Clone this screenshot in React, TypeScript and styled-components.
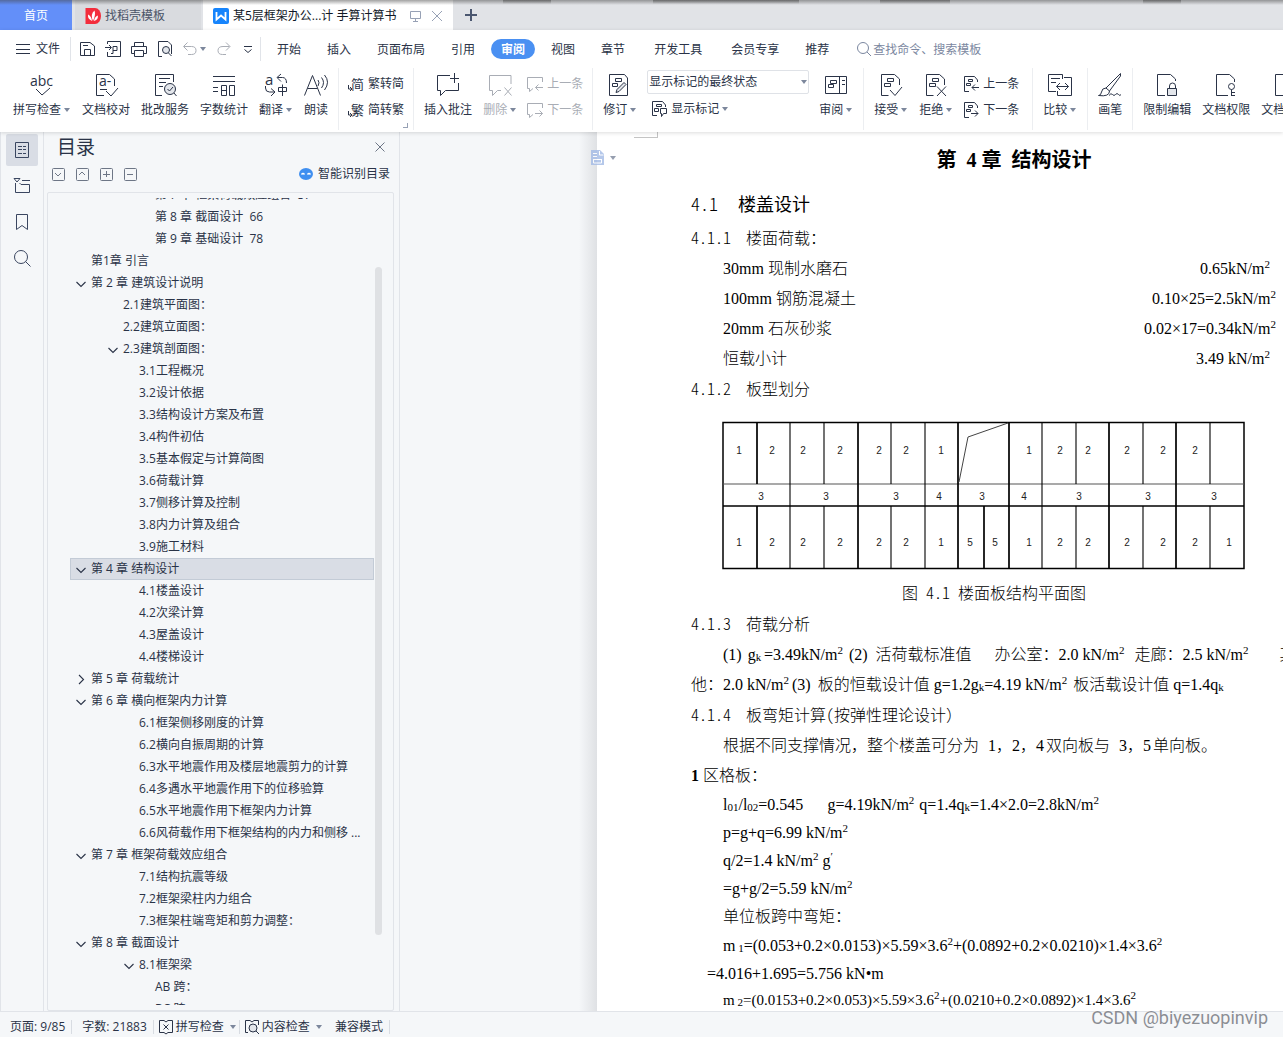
import React from "react";
import styled, { createGlobalStyle, css } from "styled-components";

const ink = "#2a3347";
const muted = "#a9adb5";
const line = "#e1e4e9";
const panel = "#f5f7f9";
const uiFont = `"Open Sans", "Noto Sans CJK SC", sans-serif`;
const docFont = `"Liberation Serif", "Noto Sans CJK SC", serif`;

const GlobalStyle = createGlobalStyle`
  * { box-sizing: border-box; }
  body { margin: 0; overflow: hidden; background: ${panel}; }
  button, input, select { font: inherit; color: inherit; }
  button { border: 0; background: none; padding: 0; white-space: nowrap; }
  ul, h1, h2, h3, p, figure { margin: 0; padding: 0; }
  svg { display: block; flex: none; overflow: visible; fill: none; stroke: currentColor; }
`;

const Shell = styled.div`
  position: relative;
  display: flex;
  flex-direction: column;
  height: 100vh;
  overflow: hidden;
  font: 12px/18px ${uiFont};
  color: ${ink};
`;

/* ---------- window tabs ---------- */

const TabStrip = styled.nav`
  display: flex;
  flex: none;
  height: 30px;
  background: #e1e3e7;
  position: relative;
  &::after {
    content: "";
    position: absolute;
    inset: 0 0 auto 0;
    height: 5px;
    background:
      linear-gradient(rgba(40, 40, 40, 0.4), transparent) 503px 0 / 48px 4px no-repeat,
      linear-gradient(rgba(40, 40, 40, 0.4), transparent) 653px 0 / 146px 4px no-repeat,
      linear-gradient(rgba(40, 40, 40, 0.4), transparent) 880px 0 / 70px 4px no-repeat,
      linear-gradient(rgba(40, 40, 40, 0.4), transparent) 1143px 0 / 38px 4px no-repeat,
      linear-gradient(rgba(70, 70, 70, 0.5), rgba(120, 120, 120, 0));
  }
`;

const tabColors = {
  home: css`width: 72px; justify-content: center; margin-right: 3px; color: #fff; background: #638ff9;`,
  idle: css`width: 126px; margin-right: 2px; padding-left: 10px; color: #4b5468; background: #d9dbdf;`,
  active: css`width: 250px; padding-left: 10px; color: #111827; background: #fff;`,
};

const WindowTab = styled.button<{ $kind: keyof typeof tabColors }>`
  display: flex;
  align-items: center;
  flex: none;
  gap: 4px;
  padding-top: 2px;
  ${(p) => tabColors[p.$kind]}
`;

const TabTools = styled.span`
  display: flex;
  align-items: center;
  gap: 9px;
  margin-left: 10px;
  color: #97a1b5;
`;

const NewTab = styled.button`
  width: 36px;
  display: flex;
  align-items: center;
  justify-content: center;
  color: #4b5770;
`;

/* ---------- menu bar ---------- */

const Header = styled.header`
  position: relative;
  z-index: 2;
  flex: none;
  background: #fff;
  box-shadow: 0 1px 4px rgba(0, 0, 0, 0.14);
`;

const MenuBar = styled.div`
  display: flex;
  align-items: center;
  height: 38px;
`;

const FileButton = styled.button`
  display: flex;
  align-items: center;
  gap: 6px;
  height: 24px;
  padding: 0 10px 0 16px;
  border-right: 1px solid ${line};
`;

const QuickBar = styled.div`
  display: flex;
  align-items: center;
  gap: 10px;
  height: 24px;
  padding: 0 5px 0 8px;
  border-right: 1px solid ${line};
`;

const QuickButton = styled.button<{ $off?: boolean }>`
  display: flex;
  align-items: center;
  color: ${(p) => (p.$off ? muted : ink)};
`;

const MenuTabs = styled.div`
  display: flex;
  gap: 6px;
  margin-left: 6px;
`;

const MenuTab = styled.button<{ $on?: boolean; $wide?: boolean }>`
  height: 20px;
  padding: 1px 10px 0 ${(p) => (p.$wide ? 13 : 10)}px;
  border-radius: 10px;
  ${(p) => p.$on && css`background: #4a90f2; color: #fff; font-weight: 700;`}
`;

const Search = styled.label`
  display: flex;
  align-items: center;
  gap: 1px;
  margin-left: 17px;
  color: #7b87a0;
`;

const SearchInput = styled.input`
  width: 140px;
  height: 20px;
  padding: 0;
  border: 0;
  outline: 0;
  background: none;
  &::placeholder { color: #7b87a0; opacity: 1; }
`;

/* ---------- ribbon ---------- */

const Ribbon = styled.div`
  display: flex;
  height: 64px;
  overflow: hidden;
`;

const Group = styled.div<{ $first?: boolean }>`
  position: relative;
  display: flex;
  flex: none;
  height: 62px;
  padding: 4px 5px 0 ${(p) => (p.$first ? 7 : 4)}px;
  border-right: 1px solid #eceef1;
`;

const BigButton = styled.button<{ $off?: boolean }>`
  display: flex;
  flex-direction: column;
  align-items: center;
  height: 52px;
  padding: 1px 5px 0 6px;
  color: ${(p) => (p.$off ? muted : ink)};
`;

const Caption = styled.span`
  display: flex;
  align-items: center;
  height: 26px;
`;

const Arrow = styled.i`
  width: 6px;
  margin: 0 1px 0 3px;
  border: solid transparent;
  border-width: 4px 3px 0;
  border-top-color: #7c879c;
`;

const Stack = styled.div<{ $wide?: boolean }>`
  display: flex;
  flex-direction: column;
  gap: 2px;
  padding: 0 ${(p) => (p.$wide ? 8 : 4)}px 0 5px;
`;

const SmallButton = styled.button<{ $off?: boolean }>`
  display: flex;
  align-items: center;
  gap: 4px;
  height: 24px;
  color: ${(p) => (p.$off ? muted : ink)};
`;

const Corner = styled.i`
  position: absolute;
  right: 5px;
  bottom: 2px;
  width: 5px;
  height: 5px;
  border: solid #97a1b5;
  border-width: 0 1px 1px 0;
`;

const MarkupStack = styled.div`
  display: flex;
  flex-direction: column;
  width: 162px;
  margin: 0 4px 0 5px;
`;

const SelectBox = styled.div`
  display: flex;
  align-items: center;
  margin-top: -2px;
  border: 1px solid #dfe2e7;
  border-radius: 2px;
`;

const Select = styled.select`
  flex: 1;
  height: 22px;
  padding: 0 1px;
  border: 0;
  background: none;
  appearance: none;
`;

const MarkupButton = styled(SmallButton)`
  margin-left: 5px;
  height: 30px;
`;

/* ---------- workspace ---------- */

const Workspace = styled.div`
  display: flex;
  flex: 1;
  min-height: 0;
`;

const Rail = styled.nav`
  display: flex;
  flex-direction: column;
  flex: none;
  gap: 4px;
  width: 44px;
  padding: 2px 0 0 5px;
  background: ${panel};
  border: solid ${line};
  border-width: 0 1px;
`;

const RailButton = styled.button<{ $on?: boolean }>`
  display: flex;
  align-items: center;
  justify-content: center;
  width: 32px;
  height: 32px;
  border-radius: 2px;
  color: #3a4660;
  background: ${(p) => (p.$on ? "#d9dde5" : "none")};
`;

const Outline = styled.aside`
  display: flex;
  flex-direction: column;
  flex: none;
  width: 356px;
  padding: 0 5px 0 3px;
  background: ${panel};
  border-right: 1px solid ${line};
`;

const OutlineHead = styled.div`
  display: flex;
  align-items: center;
  justify-content: space-between;
  height: 30px;
  padding: 0 8px 0 10px;
`;

const OutlineTitle = styled.h2`
  font-size: 19px;
  font-weight: 400;
`;

const OutlineTools = styled.div`
  display: flex;
  align-items: center;
  gap: 10px;
  height: 24px;
  margin-bottom: 6px;
  padding: 0 4px 0 4px;
`;

const ToolBox = styled.button`
  display: flex;
  color: #6d7686;
`;

const SmartButton = styled.button`
  display: flex;
  align-items: center;
  gap: 5px;
  margin-left: auto;
`;

const ListBox = styled.div`
  display: flex;
  flex: 1;
  min-height: 0;
  padding: 5px 11px 5px 22px;
  border: 1px solid ${line};
  border-radius: 2px;
`;

const Tree = styled.div`
  flex: 1;
  min-width: 0;
  overflow: hidden;
`;

const TreeList = styled.ul`
  margin-top: -14px;
  list-style: none;
`;

const TreeRow = styled.li<{ $indent: number; $on?: boolean }>`
  display: flex;
  align-items: center;
  height: 22px;
  padding-left: ${(p) => p.$indent + 5}px;
  border: 1px solid transparent;
  white-space: pre;
  ${(p) => p.$on && css`background: #d9dde5; border-color: #c3cbd6;`}
`;

const Twist = styled.span`
  display: flex;
  width: 15px;
`;

const ScrollTrack = styled.div`
  display: flex;
  width: 8px;
  padding: 69px 0 70px 1px;
`;

const ScrollThumb = styled.div`
  flex: 1;
  border-radius: 4px;
  background: #dfe1e4;
`;

/* ---------- document ---------- */

const Desk = styled.main`
  display: flex;
  flex: 1;
  min-width: 0;
  overflow: hidden;
  background: ${panel};
`;

const Gutter = styled.div`
  flex: 1 0 197px;
  background: linear-gradient(to left, #dfe1e4, ${panel} 18px);
  &:last-child { background: linear-gradient(to right, #dfe1e4, ${panel} 18px); }
`;

const Page = styled.article`
  position: relative;
  flex: none;
  width: 794px;
  padding: 0 94px;
  background: #fff;
  color: #000;
  font: 300 16px/30px ${docFont};
  white-space: pre;
`;

const CropMark = styled.div`
  width: 24px;
  height: 6px;
  margin: 0 0 7px -57px;
  border: solid #c4c4c4;
  border-width: 0 1px 1px 0;
`;

const PageTag = styled.button`
  position: absolute;
  left: -6px;
  top: 18px;
  display: flex;
  align-items: center;
  gap: 2px;
  color: #b3c7ea;
  opacity: 0.8;
`;

const Chapter = styled.h1`
  margin-bottom: 15px;
  padding-left: 40px;
  font-size: 20px;
  font-weight: 700;
  text-align: center;
`;

const Section = styled.h2`
  margin-bottom: 3px;
  font-size: 18px;
  font-weight: 400;
`;

const Clause = styled.h3`
  padding-top: 1px;
  font-size: 16px;
  font-weight: 300;
`;

const Mono = styled.span`
  font-family: "Noto Sans CJK SC", sans-serif;
  font-weight: 300;
  line-height: 0;
  font-feature-settings: "hwid";
`;

const Strong = styled.b`
  font-weight: 700;
`;

const Para = styled.p<{ $indent?: number; $lead?: number; $size?: number }>`
  padding-left: ${(p) => p.$indent ?? 32}px;
  font-size: ${(p) => p.$size ?? 16}px;
  line-height: ${(p) => p.$lead ?? 30}px;
`;

const LoadRow = styled.div<{ $tail?: number }>`
  display: flex;
  justify-content: space-between;
  padding: 0 ${(p) => p.$tail ?? 21}px 0 32px;
`;

const Figure = styled.figure`
  padding: 16px 0 9px 31px;
`;

const FigCaption = styled.p`
  text-align: center;
`;

const Sup = styled.sup`
  font-size: 11px;
  line-height: 0;
  vertical-align: 6px;
`;

const Sub = styled.sub`
  font-size: 11px;
  line-height: 0;
  vertical-align: -1px;
`;

const Gap = styled.span<{ $w: number }>`
  display: inline-block;
  width: ${(p) => p.$w}px;
`;

/* ---------- status bar ---------- */

const StatusBar = styled.footer`
  display: flex;
  align-items: center;
  flex: none;
  height: 26px;
  padding-top: 4px;
  background: ${panel};
  border-top: 1px solid ${line};
`;

const StatusItem = styled.span`
  display: flex;
  align-items: center;
  height: 14px;
  padding: 0 6px 0 10px;
  border-right: 1px solid #d8dce2;
`;

const StatusButton = styled.button`
  display: flex;
  align-items: center;
  gap: 3px;
  height: 14px;
  padding: 0 2px 0 4px;
  &:not(:last-of-type) { border-right: 1px solid #d8dce2; }
`;

const Watermark = styled.div`
  position: absolute;
  right: 15px;
  bottom: 8px;
  z-index: 3;
  font: 18px/22px Roboto, sans-serif;
  color: #8b8e94;
  text-shadow: 0 0 1px #fff;
`;

/* ---------- drawings ---------- */

const Icon = ({ w = 24, h = 24, sw = 1, children }: { w?: number; h?: number; sw?: number; children: React.ReactNode }) => (
  <svg width={w} height={h} viewBox={`0 0 ${w} ${h}`} strokeWidth={sw} aria-hidden="true">{children}</svg>
);

const Glyph = ({ x, y, size, children }: { x: number; y: number; size: number; children: string }) => (
  <text x={x} y={y} fontSize={size} fill="currentColor" stroke="none">{children}</text>
);

const DocBase = () => (
  <>
    <path d="M9.5 22.5H2.5V1.5H15.5L20.5 6V12" />
    <path d="M8.5 5.5h6v3h-6zM5.5 10.5h6v3h-6z" />
  </>
);

const big = {
  spell: <Icon w={26}><Glyph x={1} y={13} size={14}>abc</Glyph><path d="M7 16l6 6 8-7" /></Icon>,
  proof: <Icon><path d="M10 22.5H2.5V1.5H15.5L20.5 6V13" /><Glyph x={5} y={13} size={14}>a-</Glyph><path d="M6 16.5h7M12 18l5 5 7-8" /></Icon>,
  review: <Icon><path d="M9 22.5H2.5V1.5H20.5V9M6 5.5H17M6 9.5H13M6 13.5H10" /><circle cx="17" cy="16" r="5.5" fill="#e3e6eb" /><path d="M14.5 16l2 2 3.5-4M21 20l2.5 3" /></Icon>,
  count: <Icon><path d="M1 3.5H23M1 8.5H23M1 14.5H6M1 18.5H6M9.5 12.5h5v10h-5zM17.5 12.5h5v10h-5zM9.5 17.5h5" /></Icon>,
  translate: <Icon><Glyph x={1} y={12} size={15}>a</Glyph><path d="M17 1l-4 3.5 4 4M13.5 4.5h5q4 0 4 5.5M1.5 13v2q0 4 4 4h5M7 15.5l4 3.5-4 4M14.5 14.5h8v4h-8zM18.5 11.5v11.5" /></Icon>,
  read: <Icon><path d="M0.5 22.5L8.5 2.5L16.5 22.5M3.5 15.5H13.5M14 7q2 2.5 0 6M17.5 4.5q4 5 0 10.5M20.5 2q6 7 0 15" /></Icon>,
  comment: <Icon><path d="M14 2.5H1.5V17.5H4.5V22.5L9.5 17.5H22.5V10M18.5 0V10M14 5.5H23" /></Icon>,
  remove: <Icon><path d="M23 11V2.5H1.5V17.5H4.5V22.5L9.5 17.5H13M16.5 14.5l7 8M23.5 14.5l-7 8" /></Icon>,
  revise: <Icon><path d="M16.5 1.5H1.5V22.5H19.5V5L16.5 1.5" /><path d="M7.5 5.5h6v3h-6zM4.5 10.5h5v3h-5z" /><path d="M8 19.5l1-3 7-7 2 2-7 7z" fill="#e3e6eb" /></Icon>,
  pane: <Icon><path d="M1.5 3.5h21v17h-21zM15.5 3.5v17M6.5 7.5h6v3h-6zM4.5 11.5h5v3h-5zM18 7.5h3M18 11.5h3" /></Icon>,
  accept: <Icon><DocBase /><path d="M11 17l5 5.5 7-8.5" /></Icon>,
  reject: <Icon><DocBase /><path d="M13 13.5l9 9.5M22 13.5l-9 9.5" /></Icon>,
  compare: <Icon w={26}><path d="M9 18.5H1.5V1.5H15.5V6M17 4.5H24.5V22.5H10.5V18M4 5.5h9M4 9.5h5M9.5 13.5h12M13 10l-3.5 3.5 3.5 3.5M18 10l3.5 3.5-3.5 3.5" /></Icon>,
  brush: <Icon><path d="M22.5 0.5L8 15l3.5 3L22.5 3zM8 15q-4 0-4.5 4Q3 22.5 0.5 22.5q11 1.5 11-4.5M11 22.5q2-3 3.5-1t3 0 3 0 2.5 0" /></Icon>,
  lock: <Icon><path d="M10 22.5H2.5V1.5H15.5L20.5 6V8M14.5 15v-2q0-3 3-3t3 3v2" /><path d="M12.5 15.5h9v7h-9z" fill="#e3e6eb" /></Icon>,
  key: <Icon><path d="M14 22.5H2.5V1.5H15.5L20.5 6V9" /><circle cx="17.5" cy="13.5" r="3" /><path d="M17.5 16.5V23M17.5 19.5h3.5M17.5 22.5h3.5" /></Icon>,
  final: <Icon><path d="M14 22.5H2.5V1.5H15.5L20.5 6V9" /></Icon>,
};

const small = {
  toSimple: <Icon w={16} h={16}><Glyph x={3} y={13} size={13}>简</Glyph><path d="M0.5 9v4h3.5M2 11l2 2-2 2" /></Icon>,
  toTrad: <Icon w={16} h={16}><Glyph x={3} y={13} size={13}>繁</Glyph><path d="M0.5 9v4h3.5M2 11l2 2-2 2" /></Icon>,
  prevNote: <Icon w={16} h={16}><path d="M15.5 6V1.5H0.5V12.5H2.5V15.5L6 12.5M16 11.5H8.5M11.5 8.5l-3 3 3 3" /></Icon>,
  nextNote: <Icon w={16} h={16}><path d="M15.5 6V1.5H0.5V12.5H2.5V15.5L6 12.5M8 11.5H15.5M12.5 8.5l3 3-3 3" /></Icon>,
  prevEdit: <Icon w={16} h={16}><path d="M6 15.5H1.5V0.5H11.5L14.5 4V6M5.5 3.5h4v2h-4zM3.5 7.5h4v2h-4zM16 11.5H9M12 8.5l-3 3 3 3" /></Icon>,
  nextEdit: <Icon w={16} h={16}><path d="M6 15.5H1.5V0.5H11.5L14.5 4V6M5.5 3.5h4v2h-4zM3.5 7.5h4v2h-4zM8 11.5H15M12 8.5l3 3-3 3" /></Icon>,
  markup: <Icon w={15} h={16}><path d="M5 14.5H0.5V0.5H10.5L13.5 4V6M4.5 3.5h5v2h-5zM2.5 7.5h4v3h-4zM8.5 7.5h6v5h-3l-2 3v-3h-1z" /></Icon>,
};

const WriterLogo = () => (
  <svg width="16" height="16" viewBox="0 0 16 16" aria-hidden="true">
    <rect width="16" height="16" rx="2" fill="#1684fc" stroke="none" />
    <path d="M3.5 4v7.5L8 7.5l4.5 4V4" stroke="#fff" strokeWidth="1.8" />
  </svg>
);

const DocerLogo = () => (
  <svg width="16" height="16" viewBox="0 0 16 16" aria-hidden="true">
    <path d="M0.5 0H10a6 8 0 0 1 0 16H0.5z" fill="#f32d3c" stroke="none" />
    <path d="M8 13Q5 6 9.5 2.5Q11 7 8 13ZM7 13Q2.5 11 3 6.5Q6.5 8 7 13ZM9 13Q9.5 8.5 13 7.5Q13 12 9 13Z" fill="#fff" stroke="none" />
  </svg>
);

const Fold = ({ closed }: { closed?: boolean }) => (
  <Icon w={10} h={10} sw={1.1}><path d={closed ? "M3 1l4.5 4.5L3 10" : "M0.5 4L5 8.5l4.5-4.5"} /></Icon>
);

/* ---------- floor slab plan ---------- */

const bays = [1, 35, 68, 102, 136, 169, 203, 236, 287, 320, 354, 387, 421, 454, 488, 522];
const corridor = [68, 136, 203, 236, 287, 320, 387, 454];
const thick = new Set([35, 136, 236, 287, 387, 454]);
const upper: [number, string][] = [[17, "1"], [50, "2"], [81, "2"], [118, "2"], [157, "2"], [184, "2"], [219, "1"], [307, "1"], [338, "2"], [366, "2"], [405, "2"], [441, "2"], [473, "2"]];
const middle: [number, string][] = [[39, "3"], [104, "3"], [174, "3"], [217, "4"], [260, "3"], [302, "4"], [357, "3"], [426, "3"], [492, "3"]];
const lower: [number, string][] = [...upper, [248, "5"], [273, "5"], [507, "1"]];

const SlabPlan = () => (
  <svg width="524" height="149" viewBox="0 0 524 149" stroke="#222" role="img" aria-label="楼面板结构平面图">
    <rect x="1" y="1.5" width="521" height="146" strokeWidth="1.5" />
    <path d="M1 63H522" stroke="#555" strokeWidth="1.2" />
    <path d="M1 85H522" strokeWidth="1.5" />
    {bays.slice(1, -1).map((x) => (
      <path key={x} d={`M${x} 1V63M${x} 85V148`} strokeWidth={thick.has(x) ? 1.7 : 1.1} />
    ))}
    {corridor.map((x) => <path key={x} d={`M${x} 63V85`} strokeWidth={thick.has(x) ? 1.7 : 1.1} />)}
    <path d="M262 85V148" strokeWidth="1.7" />
    <path d="M237 61L246 16L286 2" stroke="#444" />
    <g fill="#222" stroke="none" fontSize="10" fontFamily="Liberation Sans Narrow, Liberation Sans" textAnchor="middle">
      {upper.map(([x, t]) => <text key={x} x={x} y="33">{t}</text>)}
      {middle.map(([x, t]) => <text key={x} x={x} y="79">{t}</text>)}
      {lower.map(([x, t]) => <text key={x} x={x} y="125">{t}</text>)}
    </g>
  </svg>
);

/* ---------- data ---------- */

type Node = { t: string; x: number; fold?: "open" | "closed"; on?: boolean };
const outline: Node[] = [
  { t: "第 7 章 框架荷载效应组合  57", x: 64 },
  { t: "第 8 章 截面设计  66", x: 64 },
  { t: "第 9 章 基础设计  78", x: 64 },
  { t: "第1章 引言", x: 0 },
  { t: "第 2 章 建筑设计说明", x: 0, fold: "open" },
  { t: "2.1建筑平面图：", x: 32 },
  { t: "2.2建筑立面图：", x: 32 },
  { t: "2.3建筑剖面图：", x: 32, fold: "open" },
  { t: "3.1工程概况", x: 48 },
  { t: "3.2设计依据", x: 48 },
  { t: "3.3结构设计方案及布置", x: 48 },
  { t: "3.4构件初估", x: 48 },
  { t: "3.5基本假定与计算简图", x: 48 },
  { t: "3.6荷载计算", x: 48 },
  { t: "3.7侧移计算及控制", x: 48 },
  { t: "3.8内力计算及组合", x: 48 },
  { t: "3.9施工材料", x: 48 },
  { t: "第 4 章 结构设计", x: 0, fold: "open", on: true },
  { t: "4.1楼盖设计", x: 48 },
  { t: "4.2次梁计算", x: 48 },
  { t: "4.3屋盖设计", x: 48 },
  { t: "4.4楼梯设计", x: 48 },
  { t: "第 5 章 荷载统计", x: 0, fold: "closed" },
  { t: "第 6 章 横向框架内力计算", x: 0, fold: "open" },
  { t: "6.1框架侧移刚度的计算", x: 48 },
  { t: "6.2横向自振周期的计算", x: 48 },
  { t: "6.3水平地震作用及楼层地震剪力的计算", x: 48 },
  { t: "6.4多遇水平地震作用下的位移验算", x: 48 },
  { t: "6.5水平地震作用下框架内力计算", x: 48 },
  { t: "6.6风荷载作用下框架结构的内力和侧移 ...", x: 48 },
  { t: "第 7 章 框架荷载效应组合", x: 0, fold: "open" },
  { t: "7.1结构抗震等级", x: 48 },
  { t: "7.2框架梁柱内力组合", x: 48 },
  { t: "7.3框架柱端弯矩和剪力调整：", x: 48 },
  { t: "第 8 章 截面设计", x: 0, fold: "open" },
  { t: "8.1框架梁", x: 48, fold: "open" },
  { t: "AB 跨：", x: 64 },
  { t: "BC 跨：", x: 64 },
];

const menus = ["开始", "插入", "页面布局", "引用", "审阅", "视图", "章节", "开发工具", "会员专享", "推荐"];

const Big = ({ icon, label, drop, off }: { icon: React.ReactNode; label: string; drop?: boolean; off?: boolean }) => (
  <BigButton $off={off}>
    {icon}
    <Caption>{label}{drop && <Arrow />}</Caption>
  </BigButton>
);

const Unit = () => <>kN/m<Sup>2</Sup></>;

export default function App() {
  return (
    <Shell>
      <GlobalStyle />
      <TabStrip>
        <WindowTab $kind="home">首页</WindowTab>
        <WindowTab $kind="idle"><DocerLogo />找稻壳模板</WindowTab>
        <WindowTab $kind="active">
          <WriterLogo />某5层框架办公...计 手算计算书
          <TabTools>
            <Icon w={12} h={12}><path d="M0.5 1.5h10v7h-10zM5.5 9v2.5M3 11.5h5" /></Icon>
            <Icon w={12} h={12}><path d="M1 1l10 10M11 1L1 11" /></Icon>
          </TabTools>
        </WindowTab>
        <NewTab aria-label="新建"><Icon w={12} h={12} sw={2}><path d="M6 0v12M0 6h12" /></Icon></NewTab>
      </TabStrip>

      <Header>
        <MenuBar>
          <FileButton><Icon w={14} h={12}><path d="M0 1.5h14M0 6.5h14M0 10.5h14" /></Icon>文件</FileButton>
          <QuickBar>
            <QuickButton aria-label="保存"><Icon w={16} h={16}><path d="M1.5 1.5H11L15.5 5V14.5H1.5zM5.5 14V8.5h6V14M4 4.5h5" /></Icon></QuickButton>
            <QuickButton aria-label="输出为PDF"><Icon w={16} h={16}><path d="M2.5 3V0.5h13v15h-13V11M0 6.5h6M4 4l2.5 2.5L4 9M6 12.5h2V5.5h4v4H8" /></Icon></QuickButton>
            <QuickButton aria-label="打印"><Icon w={16} h={16}><path d="M3.5 5V1.5h9V5M3 12.5H0.5V5.5h15v7H13M3.5 9.5h9v6h-9z" /></Icon></QuickButton>
            <QuickButton aria-label="打印预览"><Icon w={16} h={16}><path d="M5 15.5H1.5V0.5H11L14.5 4V13" /><circle cx="9" cy="9" r="3.5" fill="#e3e6eb" /><path d="M11.5 12l3 3" /></Icon></QuickButton>
            <QuickButton $off aria-label="撤销"><Icon w={14} h={16}><path d="M4.5 1.5l-4 4 4 4M1 5.5h7.5q4.5 0 4.5 4t-4.5 4H5" /></Icon><Arrow /></QuickButton>
            <QuickButton $off aria-label="恢复"><Icon w={14} h={16}><path d="M9 1.5l4 4-4 4M12.5 5.5H6q-5 0-5 4t4.5 4H9" /></Icon></QuickButton>
            <QuickButton aria-label="自定义"><Icon w={14} h={16}><path d="M3 5.5h8M3.5 8.5l3.5 3 3.5-3" /></Icon></QuickButton>
          </QuickBar>
          <MenuTabs>
            {menus.map((m) => <MenuTab key={m} $on={m === "审阅"} $wide={m === "开发工具" || m === "会员专享"}>{m}</MenuTab>)}
          </MenuTabs>
          <Search>
            <Icon w={16} h={16}><circle cx="7" cy="7" r="5.5" /><path d="M11 11l4 4" /></Icon>
            <SearchInput placeholder="查找命令、搜索模板" aria-label="查找命令、搜索模板" />
          </Search>
        </MenuBar>

        <Ribbon>
          <Group $first>
            <Big icon={big.spell} label="拼写检查" drop />
            <Big icon={big.proof} label="文档校对" />
            <Big icon={big.review} label="批改服务" />
            <Big icon={big.count} label="字数统计" />
            <Big icon={big.translate} label="翻译" drop />
            <Big icon={big.read} label="朗读" />
          </Group>
          <Group>
            <Stack>
              <SmallButton>{small.toSimple}繁转简</SmallButton>
              <SmallButton>{small.toTrad}简转繁</SmallButton>
            </Stack>
            <Corner />
          </Group>
          <Group>
            <Big icon={big.comment} label="插入批注" />
            <Big icon={big.remove} label="删除" drop off />
            <Stack>
              <SmallButton $off>{small.prevNote}上一条</SmallButton>
              <SmallButton $off>{small.nextNote}下一条</SmallButton>
            </Stack>
          </Group>
          <Group>
            <Big icon={big.revise} label="修订" drop />
            <MarkupStack>
              <SelectBox>
                <Select aria-label="标记状态" defaultValue="final"><option value="final">显示标记的最终状态</option></Select>
                <Arrow />
              </SelectBox>
              <MarkupButton>{small.markup}<Caption>显示标记<Arrow /></Caption></MarkupButton>
            </MarkupStack>
            <Big icon={big.pane} label="审阅" drop />
          </Group>
          <Group>
            <Big icon={big.accept} label="接受" drop />
            <Big icon={big.reject} label="拒绝" drop />
            <Stack $wide>
              <SmallButton>{small.prevEdit}上一条</SmallButton>
              <SmallButton>{small.nextEdit}下一条</SmallButton>
            </Stack>
          </Group>
          <Group><Big icon={big.compare} label="比较" drop /></Group>
          <Group><Big icon={big.brush} label="画笔" /></Group>
          <Group>
            <Big icon={big.lock} label="限制编辑" />
            <Big icon={big.key} label="文档权限" />
            <Big icon={big.final} label="文档定稿" />
          </Group>
        </Ribbon>
      </Header>

      <Workspace>
        <Rail>
          <RailButton $on aria-label="目录"><Icon w={16} h={18}><path d="M1.5 1.5h13v15h-13zM4 5.5h4M4 8.5h4M4 12.5h4M9 5.5h3M9 8.5h3M9 12.5h3" /></Icon></RailButton>
          <RailButton aria-label="章节"><Icon w={18} h={18}><path d="M1 1.5h6L4 5zM9 3.5h8M2.5 6V15.5h14V7.5H8L6.5 6" /></Icon></RailButton>
          <RailButton aria-label="书签"><Icon w={16} h={18}><path d="M2.5 1.5h11v15L8 12.5l-5.5 4z" /></Icon></RailButton>
          <RailButton aria-label="查找"><Icon w={18} h={18}><circle cx="8" cy="8" r="6.5" /><path d="M12.5 12.5l5 5" /></Icon></RailButton>
        </Rail>

        <Outline>
          <OutlineHead>
            <OutlineTitle>目录</OutlineTitle>
            <ToolBox aria-label="关闭"><Icon w={12} h={12}><path d="M1.5 1.5l9 9M10.5 1.5l-9 9" /></Icon></ToolBox>
          </OutlineHead>
          <OutlineTools>
            {["M4 6l3 3 3-3", "M4 8l3-3 3 3", "M7.5 4v6M4 7.5h7", "M4 7.5h6"].map((d, i) => (
              <ToolBox key={d} aria-label={["展开", "收起", "放大", "缩小"][i]}>
                <Icon w={14} h={14}><rect x="1.5" y="1.5" width="12" height="12" rx="1" /><path d={d} /></Icon>
              </ToolBox>
            ))}
            <SmartButton>
              <svg width="14" height="12" viewBox="0 0 14 12" aria-hidden="true">
                <ellipse cx="7" cy="6" rx="7" ry="6" fill="#3f8ff0" stroke="none" />
                <path d="M2.5 6.5q1.5-2 3 0M8.5 6.5q1.5-2 3 0" stroke="#fff" strokeWidth="1.3" />
              </svg>
              智能识别目录
            </SmartButton>
          </OutlineTools>
          <ListBox>
            <Tree>
              <TreeList>
                {outline.map((n, i) => (
                  <TreeRow key={i} $indent={n.x} $on={n.on}>
                    <Twist>{n.fold && <Fold closed={n.fold === "closed"} />}</Twist>
                    {n.t}
                  </TreeRow>
                ))}
              </TreeList>
            </Tree>
            <ScrollTrack><ScrollThumb /></ScrollTrack>
          </ListBox>
        </Outline>

        <Desk>
          <Gutter />
          <Page>
            <CropMark />
            <PageTag aria-label="页面标记">
              <svg width="14" height="16" viewBox="0 0 14 16" aria-hidden="true">
                <path d="M0 0H9L13 4V15H0z" fill="#a3bbe6" stroke="none" />
                <path d="M2 3.5h4M2 6.5h4M8.5 1v4h4M2 9.5h9M2.5 10v3h8v-3" stroke="#fff" />
              </svg>
              <Arrow />
            </PageTag>
            <Chapter>第  4 章  结构设计</Chapter>
            <Section><Mono>4.1</Mono><Gap $w={20} />楼盖设计</Section>
            <Clause><Mono>4.1.1</Mono><Gap $w={15} />楼面荷载：</Clause>
            <LoadRow $tail={27}><span>30mm 现制水磨石</span><span>0.65<Unit /></span></LoadRow>
            <LoadRow><span>100mm 钢筋混凝土</span><span>0.10×25=2.5<Unit /></span></LoadRow>
            <LoadRow><span>20mm 石灰砂浆</span><span>0.02×17=0.34<Unit /></span></LoadRow>
            <LoadRow $tail={27}><span>恒载小计</span><span>3.49 <Unit /></span></LoadRow>
            <Clause><Mono>4.1.2</Mono><Gap $w={15} />板型划分</Clause>
            <Figure>
              <SlabPlan />
            </Figure>
            <FigCaption>图<Mono> 4.1 </Mono>楼面板结构平面图</FigCaption>
            <Clause><Mono>4.1.3</Mono><Gap $w={15} />荷载分析</Clause>
            <Para>(1)<Gap $w={6} />g<Sub>k </Sub>=3.49<Unit /><Gap $w={6} />(2)<Gap $w={8} />活荷载标准值<Gap $w={23} />办公室：2.0 <Unit /><Gap $w={10} />走廊：2.5 <Unit /><Gap $w={31} />其</Para>
            <Para $indent={0}>他：2.0 <Unit /><Gap $w={3} />(3)<Gap $w={7} />板的恒载设计值 g=1.2g<Sub>k</Sub>=4.19 <Unit /><Gap $w={6} />板活载设计值 q=1.4q<Sub>k</Sub></Para>
            <Clause><Mono>4.1.4</Mono><Gap $w={15} />板弯矩计算<Mono>(</Mono>按弹性理论设计）</Clause>
            <Para>根据不同支撑情况，整个楼盖可分为<Gap $w={9} />1，2，4<Gap $w={2} />双向板与<Gap $w={9} />3，5<Gap $w={2} />单向板。</Para>
            <Para $indent={0}><Strong>1</Strong> 区格板：</Para>
            <Para $lead={28}>l<Sub>01</Sub>/l<Sub>02</Sub>=0.545<Gap $w={24} />g=4.19<Unit /><Gap $w={5} />q=1.4q<Sub>k</Sub>=1.4×2.0=2.8<Unit /></Para>
            <Para $lead={28}>p=g+q=6.99 <Unit /></Para>
            <Para $lead={28}>q/2=1.4 <Unit /> g<Sup>′</Sup></Para>
            <Para $lead={28}>=g+g/2=5.59 <Unit /></Para>
            <Para $lead={28}>单位板跨中弯矩：</Para>
            <Para>m<Sub> 1</Sub>=(0.053+0.2×0.0153)×5.59×3.6<Sup>2</Sup>+(0.0892+0.2×0.0210)×1.4×3.6<Sup>2</Sup></Para>
            <Para $indent={16} $lead={26}>=4.016+1.695=5.756 kN•m</Para>
            <Para $lead={26} $size={15}>m<Sub> 2</Sub>=(0.0153+0.2×0.053)×5.59×3.6<Sup>2</Sup>+(0.0210+0.2×0.0892)×1.4×3.6<Sup>2</Sup></Para>
          </Page>
          <Gutter />
        </Desk>
      </Workspace>

      <StatusBar>
        <StatusItem>页面: 9/85</StatusItem>
        <StatusItem>字数: 21883</StatusItem>
        <StatusButton>
          <Icon w={15} h={16}><path d="M6 1.5H1.5V13.5H6L8 15l2-1.5h4.5V1.5H10L8 3 6 1.5M5.5 5.5l5 5M10.5 5.5l-5 5" /></Icon>
          拼写检查<Arrow />
        </StatusButton>
        <StatusButton>
          <Icon w={15} h={16}><path d="M4 13.5H1.5V1.5H6L8 3l2-1.5h4.5V6" /><circle cx="9" cy="9" r="4" fill="#e3e6eb" /><path d="M12 12l3 3" /></Icon>
          内容检查<Arrow />
        </StatusButton>
        <StatusItem>兼容模式</StatusItem>
      </StatusBar>
      <Watermark>CSDN @biyezuopinvip</Watermark>
    </Shell>
  );
}
